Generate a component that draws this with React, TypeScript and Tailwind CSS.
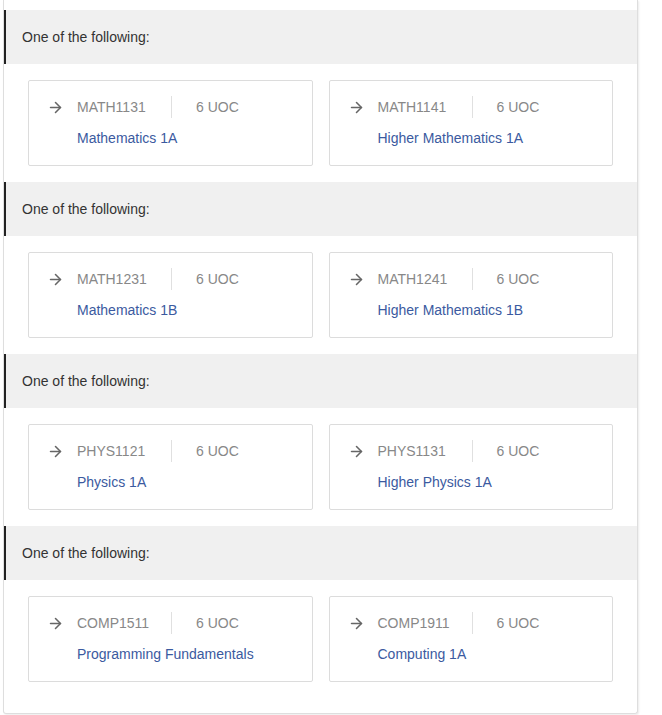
import { ArrowRight } from 'lucide-react';

type Course = { code: string; title: string; uoc: number };

const groups: Course[][] = [
  [
    { code: 'MATH1131', title: 'Mathematics 1A', uoc: 6 },
    { code: 'MATH1141', title: 'Higher Mathematics 1A', uoc: 6 },
  ],
  [
    { code: 'MATH1231', title: 'Mathematics 1B', uoc: 6 },
    { code: 'MATH1241', title: 'Higher Mathematics 1B', uoc: 6 },
  ],
  [
    { code: 'PHYS1121', title: 'Physics 1A', uoc: 6 },
    { code: 'PHYS1131', title: 'Higher Physics 1A', uoc: 6 },
  ],
  [
    { code: 'COMP1511', title: 'Programming Fundamentals', uoc: 6 },
    { code: 'COMP1911', title: 'Computing 1A', uoc: 6 },
  ],
];

const CourseCard = ({ course }: { course: Course }) => (
  <div className="h-[86px] border border-[#dcdcdc] rounded-[2px] bg-white pl-[18px] pt-[15px]">
    <div className="flex items-center h-[22px]">
      <ArrowRight size={17} strokeWidth={2.2} className="text-[#666] mr-[13px]" />
      <span className="text-[#888] w-[94px]">{course.code}</span>
      <span className="h-[22px] w-px bg-[#e0e0e0] mr-6" />
      <span className="text-[#888]">{course.uoc} UOC</span>
    </div>
    <div className="pl-[30px] mt-[10px] text-[#3b5aa0]">{course.title}</div>
  </div>
);

const App = () => {
  return (
    <div className="min-h-screen bg-white font-['Liberation_Sans',Arial,sans-serif] text-[14px]">
      <div className="ml-[3px] w-[635px] h-[714px] border-x border-b border-[#dedede] rounded-b-[3px] shadow-[1px_1px_2px_rgba(0,0,0,0.08)] pt-[10px]">
        {groups.map((group, i) => (
          <div key={i} className="pb-4">
            <div className="h-[54px] bg-[#f0f0f0] border-l-2 border-[#222] flex items-center pl-4 text-[#333]">
              One of the following:
            </div>
            <div className="grid grid-cols-2 gap-4 px-6 pt-4">
              {group.map((c) => (
                <CourseCard key={c.code} course={c} />
              ))}
            </div>
          </div>
        ))}
      </div>
    </div>
  );
};

export default App;
